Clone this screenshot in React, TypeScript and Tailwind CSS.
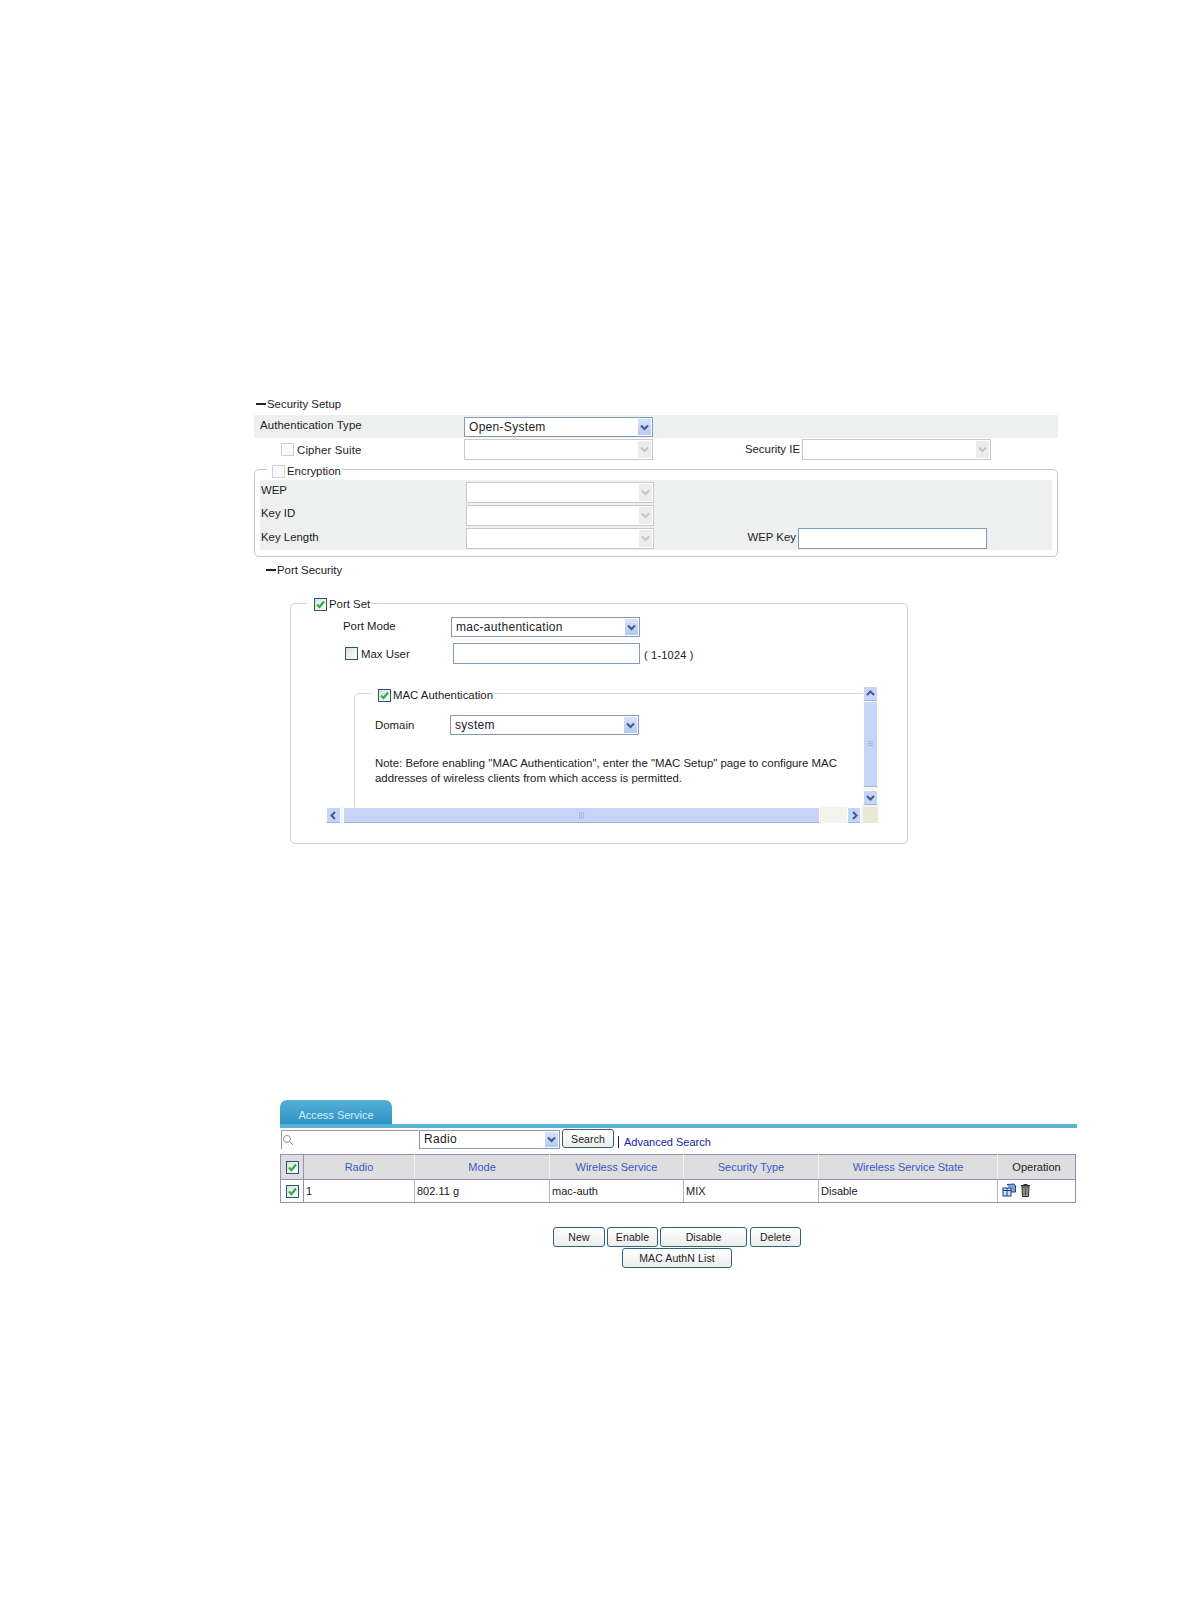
import React from "react";

function Minus() {
  return <span className="block w-[10px] h-[2px] bg-[#222] mr-px -mt-[3px]" />;
}

function Check({ checked = false, disabled = false }: { checked?: boolean; disabled?: boolean }) {
  return (
    <span
      className={
        disabled
          ? "flex w-[13px] h-[13px] shrink-0 border border-[#cfcfcf] bg-[#fafafa]"
          : "flex w-[13px] h-[13px] shrink-0 border border-[#1f5a78] bg-gradient-to-br from-[#dedeD8] to-white"
      }
    >
      {checked && (
        <svg viewBox="0 0 11 11" className="w-[11px] h-[11px]">
          <path d="M2 5.5 L4.5 8 L9 2.5" fill="none" stroke="#2fb04a" strokeWidth="2.2" />
        </svg>
      )}
    </span>
  );
}

function Chevron({ color }: { color: string }) {
  return (
    <svg viewBox="0 0 9 7" className="w-[9px] h-[7px]">
      <path d="M1 1.5 L4.5 5 L8 1.5" fill="none" stroke={color} strokeWidth="2" />
    </svg>
  );
}

function Select({
  value,
  className,
  disabled = false,
}: {
  value?: string;
  className: string;
  disabled?: boolean;
}) {
  return (
    <div
      className={
        "flex shrink-0 items-center justify-between bg-white border " +
        (disabled ? "border-[#c9c9c9] " : "border-[#7f9db9] ") +
        className
      }
    >
      <span className="pl-[4px] pb-px text-[12px] tracking-[0.3px] text-[#222] leading-none">{value}</span>
      {disabled ? (
        <span className="flex items-center justify-center w-[15px] h-full border border-white bg-[#ececea]">
          <Chevron color="#c4c4c4" />
        </span>
      ) : (
        <span className="flex items-center justify-center w-[15px] h-full border border-white bg-gradient-to-b from-[#d8e2fa] to-[#b6c8f2]">
          <Chevron color="#3f5a90" />
        </span>
      )}
    </div>
  );
}

function ScrollBtn({ d, className }: { d: string; className: string }) {
  return (
    <span className={"flex shrink-0 items-center justify-center border border-white border-b-[#9db3e0] bg-[#c6d5f7] rounded-[2px] " + className}>
      <svg viewBox="0 0 9 9" className="w-[9px] h-[9px]">
        <path d={d} fill="none" stroke="#3f5a90" strokeWidth="2" />
      </svg>
    </span>
  );
}

function Btn({ label, className }: { label: string; className: string }) {
  return (
    <button className={"flex items-center justify-center pt-px border border-[#2f6478] rounded-[3px] bg-gradient-to-b from-white to-[#ececec] text-[10.5px] tracking-[0.1px] text-[#222] " + className}>
      {label}
    </button>
  );
}

const headers = ["Radio", "Mode", "Wireless Service", "Security Type", "Wireless Service State"];
const cells = ["1", "802.11 g", "mac-auth", "MIX", "Disable"];

export default function App() {
  return (
    <div className="w-[1190px] h-[1616px] bg-white pt-[398px] text-[11.4px] leading-none text-[#222] font-['Liberation_Sans',Arial,sans-serif] overflow-hidden">
      {/* Security Setup */}
      <div className="flex items-center h-[17px] pb-[3px] ml-[256px]">
        <Minus />
        <span>Security Setup</span>
      </div>
      <div className="ml-[254px] w-[804px]">
        <div className="flex h-[23px] pt-[2px] bg-[#eef0ef]">
          <span className="w-[210px] pl-[6px] pt-[3px] tracking-[0.1px]">Authentication Type</span>
          <Select value="Open-System" className="w-[189px] h-[20px]" />
        </div>
        <div className="flex items-center h-[23px]">
          <div className="flex items-center w-[210px] pl-[27px] gap-[3px]">
            <Check disabled />
            <span className="pt-[2px] tracking-[0.15px]">Cipher Suite</span>
          </div>
          <Select disabled className="w-[189px] h-[21px]" />
          <span className="w-[149px] text-right pr-[2px]">Security IE</span>
          <Select disabled className="w-[189px] h-[21px]" />
        </div>

        {/* Encryption */}
        <div className="relative mt-[8px] h-[88px] border border-[#c8c8c8] rounded-[5px] pt-[10px] px-[5px]">
          <div className="absolute left-[12px] -top-[5px] flex items-center gap-[2px] h-[13px] pl-[5px] pr-[1px] bg-white">
            <Check disabled />
            <span>Encryption</span>
          </div>
          <div className="h-[70px] bg-[#eef0ef]">
            <div className="flex items-center h-[23px] pt-px">
              <span className="w-[206px] pl-px -mt-[2px]">WEP</span>
              <Select disabled className="w-[188px] h-[21px]" />
            </div>
            <div className="flex items-center h-[23px] pt-px">
              <span className="w-[206px] pl-px -mt-[2px]">Key ID</span>
              <Select disabled className="w-[188px] h-[21px]" />
            </div>
            <div className="flex items-center h-[23px] pt-px">
              <span className="w-[206px] pl-px -mt-px">Key Length</span>
              <Select disabled className="w-[188px] h-[21px]" />
              <span className="w-[144px] text-right pr-[2px]">WEP Key</span>
              <div className="w-[189px] h-[21px] bg-white border border-[#7f9db9]" />
            </div>
          </div>
        </div>
      </div>

      {/* Port Security */}
      <div className="flex items-center h-[16px] mt-[6px] ml-[266px]">
        <Minus />
        <span>Port Security</span>
      </div>
      <div className="relative ml-[290px] mt-[24px] w-[618px] h-[241px] border border-[#d0d0d0] rounded-[5px] pt-[13px]">
        <div className="absolute left-[16px] -top-[6px] flex items-center gap-[2px] h-[13px] pl-[7px] pr-px bg-white">
          <Check checked />
          <span>Port Set</span>
        </div>
        <div className="flex items-center h-[20px] pl-[52px]">
          <span className="w-[108px] -mt-px">Port Mode</span>
          <Select value="mac-authentication" className="w-[189px] h-[20px]" />
        </div>
        <div className="flex items-center h-[21px] mt-[6px] pl-[54px]">
          <div className="flex items-center w-[108px] gap-[3px]">
            <Check />
            <span className="pt-[2px]">Max User</span>
          </div>
          <div className="w-[187px] h-[21px] bg-white border border-[#7f9db9]" />
          <span className="pl-[4px] pt-[4px] text-[11px] tracking-[0.2px]">( 1-1024 )</span>
        </div>

        {/* scrolling MAC Authentication frame */}
        <div className="ml-[35px] mt-[22px] w-[552px]">
          <div className="flex h-[121px]">
            <div className="w-[537px] pt-[7px] pl-[28px]">
              <div className="relative h-[114px] border-l border-t border-[#d8d8d8] rounded-tl-[5px] pt-[21px]">
                <div className="absolute left-[17px] -top-[5px] flex items-center gap-[2px] h-[13px] pl-[6px] pr-px bg-white">
                  <Check checked />
                  <span>MAC Authentication</span>
                </div>
                <div className="flex items-center h-[20px] pl-[20px]">
                  <span className="w-[75px] pt-[2px]">Domain</span>
                  <Select value="system" className="w-[189px] h-[20px]" />
                </div>
                <p className="mt-[21px] pl-[20px] leading-[15px] whitespace-nowrap">
                  Note: Before enabling "MAC Authentication", enter the "MAC Setup" page to configure MAC
                  <br />
                  addresses of wireless clients from which access is permitted.
                </p>
              </div>
            </div>
            <div className="flex flex-col w-[15px] bg-[#f5f5ef]">
              <ScrollBtn d="M1 6 L4.5 2.5 L8 6" className="w-[15px] h-[15px]" />
              <div className="flex items-center justify-center h-[86px] border border-white border-b-[#9db3e0] rounded-[2px] bg-[#c6d5f7] text-[#9fb3dd]">≡</div>
              <div className="h-[3px]" />
              <ScrollBtn d="M1 3 L4.5 6.5 L8 3" className="w-[15px] h-[15px]" />
            </div>
          </div>
          <div className="flex h-[16px] bg-[#f5f5ef]">
            <ScrollBtn d="M6 1 L2.5 4.5 L6 8" className="w-[15px] h-[16px]" />
            <div className="flex items-center justify-center w-[477px] ml-[2px] border border-white border-b-[#9db3e0] rounded-[2px] bg-[#c6d5f7] text-[8px] text-[#8fa6d6]">|||</div>
            <div className="w-[27px]" />
            <ScrollBtn d="M3 1 L6.5 4.5 L3 8" className="w-[14px] h-[16px]" />
            <div className="w-[15px] ml-auto bg-[#e9e8d8]" />
          </div>
        </div>
      </div>

      {/* Access Service */}
      <div className="ml-[280px] mt-[256px] w-[797px] h-[28px] border-b-[4px] border-[#5ab2da]">
        <div className="flex items-center justify-center w-[112px] h-[24px] pt-[7px] rounded-t-[7px] bg-gradient-to-b from-[#56b0d6] to-[#2a93c4] text-[11px] text-[#d5eaf5]">
          Access Service
        </div>
      </div>
      <div className="flex items-start h-[19px] ml-[281px] mt-[2px]">
        <div className="flex items-center w-[137px] h-[19px] border-l border-t border-[#9a9a9a]">
          <svg viewBox="0 0 12 12" className="w-[12px] h-[12px]">
            <circle cx="5" cy="5" r="3.5" fill="none" stroke="#909090" />
            <path d="M7.5 7.5 L11 11" stroke="#909090" />
          </svg>
        </div>
        <Select value="Radio" className="w-[141px] h-[19px] ml-px" />
        <Btn label="Search" className="w-[52px] h-[19px] ml-[2px] -mt-px" />
        <span className="w-px h-[12px] bg-[#222] ml-[4px] mt-[6px]" />
        <span className="ml-[5px] mt-[7px] text-[11px] text-[#1a1aa8]">Advanced Search</span>
      </div>
      <table className="ml-[280px] mt-[5px] w-[795px] table-fixed border-collapse text-[11px]">
        <colgroup>
          <col className="w-[23px]" />
          <col className="w-[111px]" />
          <col className="w-[135px]" />
          <col className="w-[134px]" />
          <col className="w-[135px]" />
          <col className="w-[179px]" />
          <col className="w-[78px]" />
        </colgroup>
        <thead>
          <tr className="h-[25px] bg-[#dedede]">
            <th className="border border-[#9090ba] pt-px font-normal">
              <div className="flex justify-center"><Check checked /></div>
            </th>
            {headers.map((h) => (
              <th key={h} className="border border-[#9090ba] border-l-[#f2f2f2] border-r-[#f2f2f2] pt-px font-normal text-[#3d56c4]">
                {h}
              </th>
            ))}
            <th className="border border-[#9090ba] pt-px font-normal">Operation</th>
          </tr>
        </thead>
        <tbody>
          <tr className="h-[23px]">
            <td className="border border-[#9090ba]">
              <div className="flex justify-center"><Check checked /></div>
            </td>
            {cells.map((c) => (
              <td key={c} className="border border-[#b5b5cf] border-b-[#9090ba] pl-[2px]">
                {c}
              </td>
            ))}
            <td className="border border-[#9090ba] pl-[4px]">
              <div className="flex items-center gap-[4px] -mt-[2px]">
                <svg viewBox="0 0 14 14" className="w-[14px] h-[14px]">
                  <path d="M5 1.5 L12 1 L13.5 3 V9 H9" fill="#7fa8dc" stroke="#1c3f8c" />
                  <rect x="1" y="5" width="8" height="8" fill="#cfe0f6" stroke="#1c3f8c" />
                  <path d="M1 7.5 H9 M5 5 V13" stroke="#1c3f8c" />
                </svg>
                <svg viewBox="0 0 11 14" className="w-[11px] h-[14px]">
                  <path d="M3.5 1 H7.5 V2 H10 V3.5 H1 V2 H3.5 Z" fill="#333" />
                  <path d="M2 4 H9 L8.5 13.5 H2.5 Z" fill="#c4c4c4" stroke="#222" />
                  <path d="M4 5 V12.5 M5.5 5 V12.5 M7 5 V12.5" stroke="#333" strokeWidth="0.8" />
                </svg>
              </div>
            </td>
          </tr>
        </tbody>
      </table>

      {/* Buttons */}
      <div className="ml-[553px] mt-[24px] w-[248px]">
        <div className="flex gap-[2px]">
          <Btn label="New" className="w-[52px] h-[20px]" />
          <Btn label="Enable" className="w-[51px] h-[20px]" />
          <Btn label="Disable" className="w-[87px] h-[20px]" />
          <Btn label="Delete" className="w-[51px] h-[20px] ml-px" />
        </div>
        <div className="flex justify-center mt-px">
          <Btn label="MAC AuthN List" className="w-[110px] h-[20px]" />
        </div>
      </div>
    </div>
  );
}
